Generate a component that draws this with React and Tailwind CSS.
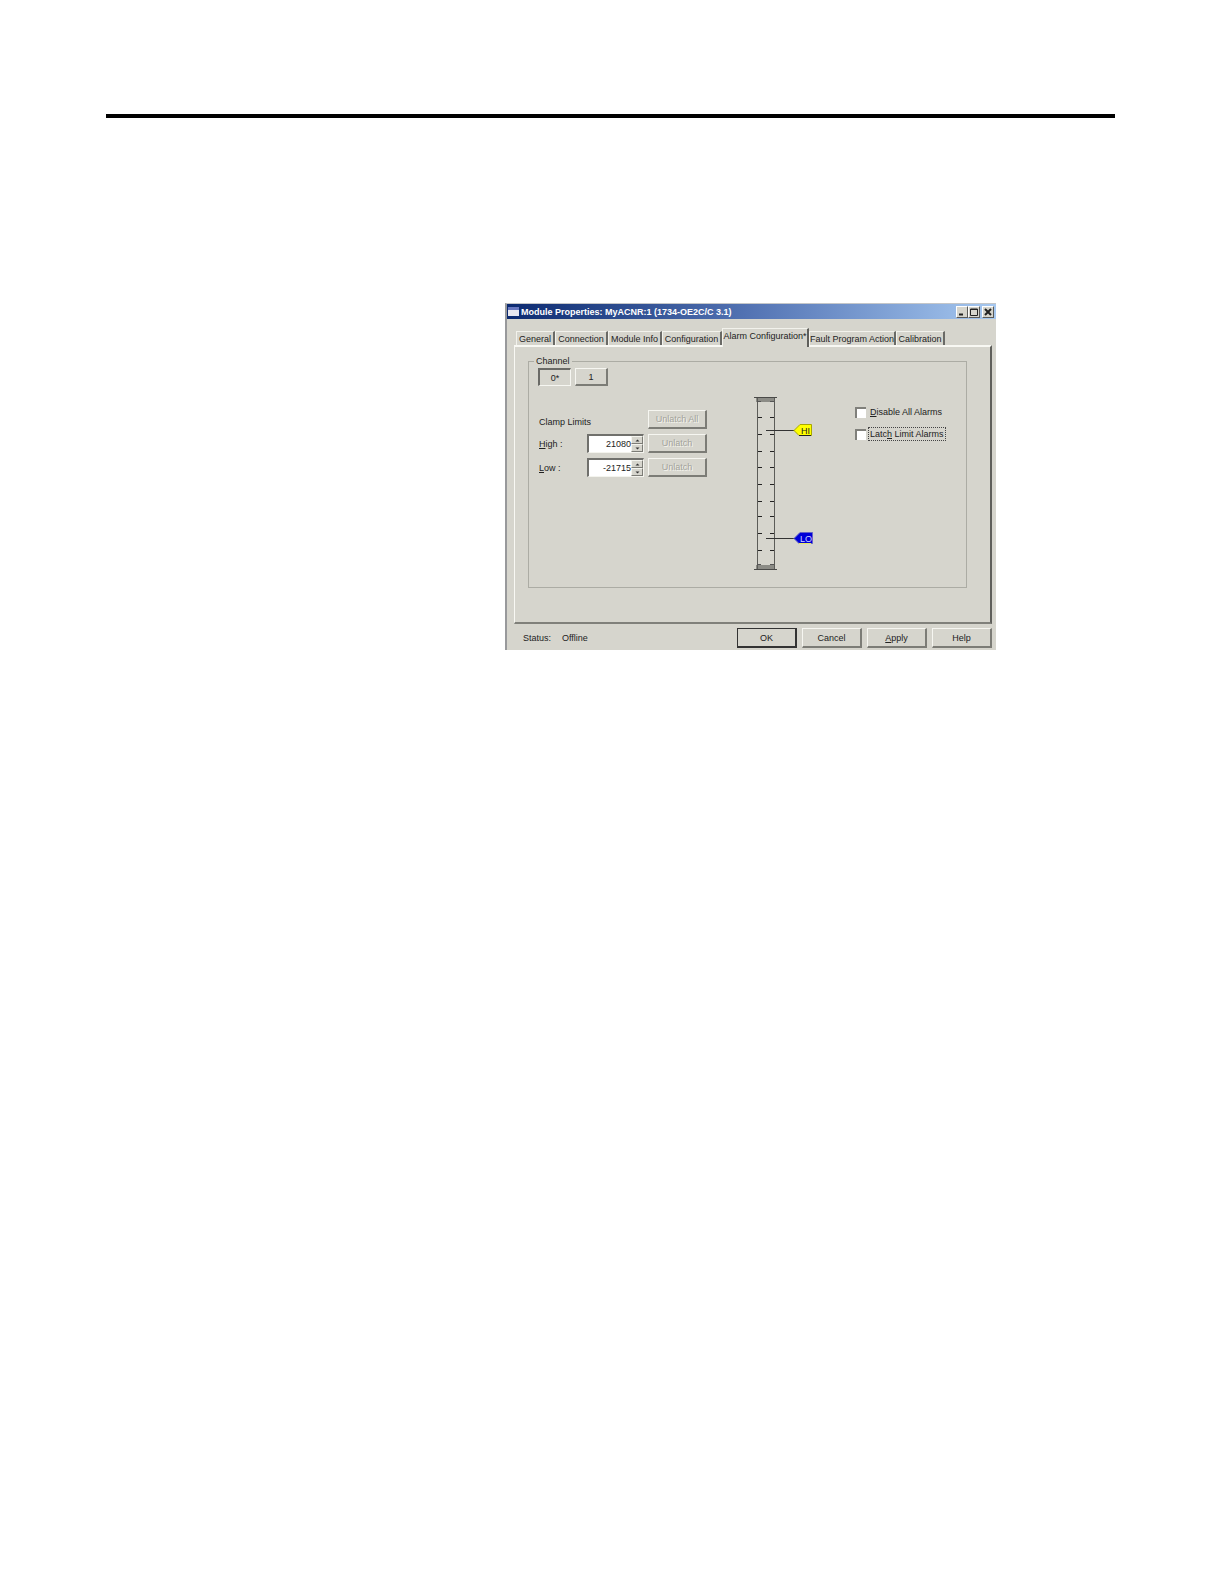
import clsx from 'clsx'
import { useState } from 'react'

const TABS = [
	{ name: 'General', width: 'w-[39px]' },
	{ name: 'Connection', width: 'w-[53px]' },
	{ name: 'Module Info', width: 'w-[54px]' },
	{ name: 'Configuration', width: 'w-[60px]' },
	{ name: 'Alarm Configuration*', width: 'w-[87px]' },
	{ name: 'Fault Program Action', width: 'w-[87px]' },
	{ name: 'Calibration', width: 'w-[49px]' },
]

const TICKS = [21, 38, 55, 71, 88, 105, 120, 137, 154]

const raised = 'border-t border-l border-r-2 border-b-2 border-t-[#f6f6f1] border-l-[#f6f6f1] border-r-[#7c7c76] border-b-[#7c7c76] bg-[#d6d5cd]'

const TitleButton = ({ label, children }) => (
	<button
		type="button"
		aria-label={label}
		className="flex h-3 w-3 items-center justify-center border border-t-white border-l-white border-r-[#5a5a58] border-b-[#5a5a58] bg-[#d6d5cd]"
	>
		<svg width="8" height="8" viewBox="0 0 8 8" fill="none" stroke="#222">
			{children}
		</svg>
	</button>
)

const Spinner = ({ id, value, onChange }) => (
	<div className="flex h-[19px] w-[57px] border border-t-2 border-l-2 border-t-[#70706c] border-l-[#70706c] border-r-[#f4f4ee] border-b-[#f4f4ee] bg-white">
		<input
			id={id}
			type="text"
			value={value}
			onChange={(e) => onChange(Number(e.target.value) || 0)}
			className="w-0 flex-1 bg-white text-right outline-none"
		/>
		<div className="flex w-3 flex-col">
			<button type="button" aria-label="Increase" onClick={() => onChange(value + 1)} className="flex flex-1 items-center justify-center border border-t-[#f4f4ee] border-l-[#f4f4ee] border-r-[#7c7c76] border-b-[#7c7c76] bg-[#d6d5cd]">
				<svg width="5" height="3" viewBox="0 0 5 3"><path d="M0.5 2.5L2.5 0.5L4.5 2.5Z" fill="#333" /></svg>
			</button>
			<button type="button" aria-label="Decrease" onClick={() => onChange(value - 1)} className="flex flex-1 items-center justify-center border border-t-[#f4f4ee] border-l-[#f4f4ee] border-r-[#7c7c76] border-b-[#7c7c76] bg-[#d6d5cd]">
				<svg width="5" height="3" viewBox="0 0 5 3"><path d="M0.5 0.5L2.5 2.5L4.5 0.5Z" fill="#333" /></svg>
			</button>
		</div>
	</div>
)

const UnlatchButton = ({ children }) => (
	<button type="button" disabled className={clsx(raised, 'h-[19px] w-[59px] text-[#a3a39b] [text-shadow:1px_1px_0_#f4f4ee]')}>
		{children}
	</button>
)

const Check = ({ id, focused, children }) => (
	<div className="flex h-[14px] items-center gap-[3px]">
		<input
			id={id}
			type="checkbox"
			className="h-[11px] w-[11px] appearance-none border-t-2 border-l-2 border-[#80807b] bg-white checked:bg-[#333]"
		/>
		<label
			htmlFor={id}
			className={clsx('px-px leading-3 whitespace-nowrap', focused && 'outline-1 outline-dotted outline-[#444]')}
		>
			{children}
		</label>
	</div>
)

// Vertical scale with the high and low clamp markers
const Gauge = () => (
	<svg width="64" height="175" viewBox="0 0 64 175" className="shrink-0">
		<rect x="4" y="2" width="19" height="4" fill="#8c8c86" />
		<rect x="4" y="169" width="19" height="4" fill="#8c8c86" />
		<path d="M2 1.5H25M2 173.5H25" stroke="#4a4a48" />
		<path d="M5.5 2V173M22.5 2V173" stroke="#5c5c58" />
		<path d="M5 5.5H9M18 5.5H22M5 168.5H9M18 168.5H22" stroke="#555" />
		{TICKS.map((y) => (
			<path key={y} d={`M6 ${y}.5H10M18 ${y}.5H22`} stroke="#222" />
		))}
		<path d="M14 34.5H43M14 142.5H43" stroke="#333" />
		<path d="M42 34.5L48 28.5H59.5V39.5H47Z" fill="#ffff00" stroke="#a8a800" />
		<path d="M47 39.5H59" stroke="#222" />
		<text x="49" y="38" fontSize="9" fill="#222">HI</text>
		<path d="M42 142.5L48 136.5H60.5V147.5H47Z" fill="#0000d8" stroke="#6464c8" />
		<path d="M47 147.5H59" stroke="#e8e860" />
		<text x="48" y="146" fontSize="9" fill="#d0d0ff">LO</text>
	</svg>
)

const App = () => {
	const [tab, setTab] = useState('Alarm Configuration*')
	const [channel, setChannel] = useState(0)
	const [high, setHigh] = useState(21080)
	const [low, setLow] = useState(-21715)

	return (
		<div className="min-h-screen bg-white pt-[114px] pr-[109px] pl-[106px]">
			<hr className="border-t-4 border-black" />

			<main className="mt-[185px] mr-[119px] ml-auto max-w-[491px] border-t border-l-2 border-t-[#c4c6c8] border-l-[#98999b] bg-[#d6d5cd] pb-[2px] font-['Liberation_Sans',sans-serif] text-[9px] leading-[10px] text-[#222]">
				{/* Title bar */}
				<header className="flex h-[15px] items-center bg-linear-to-r from-[#0c2a70] via-[#5474b4] to-[#a6c8f0] pr-[2px] pl-px">
					<svg width="11" height="9" viewBox="0 0 11 9">
						<rect width="11" height="9" fill="#e8e8f0" />
						<rect width="11" height="3" fill="#6878c0" />
					</svg>
					<h1 className="ml-[2px] flex-1 font-bold whitespace-nowrap text-white">
						Module Properties: MyACNR:1 (1734-OE2C/C 3.1)
					</h1>
					<div className="flex">
						<TitleButton label="Minimize"><path d="M1 6.5H5" strokeWidth="2" /></TitleButton>
						<TitleButton label="Maximize"><path d="M0.5 1H7.5V7.5H0.5Z M0 1.5H8" /></TitleButton>
						<div className="ml-[2px]">
							<TitleButton label="Close"><path d="M1 1L7 7M7 1L1 7" strokeWidth="2" /></TitleButton>
						</div>
					</div>
				</header>

				<div className="pt-[9px] pr-1 pl-[7px]">
					{/* Tabs */}
					<div role="tablist" className="flex items-end pl-[2px]">
						{TABS.map(({ name, width }) => (
							<button
								key={name}
								type="button"
								role="tab"
								aria-selected={tab === name}
								onClick={() => setTab(name)}
								className={clsx(
									width,
									'shrink-0 border-t border-l border-t-[#f2f2ec] border-l-[#f2f2ec] text-center whitespace-nowrap',
									tab === name
										? 'relative -mb-[2px] h-[19px] border-r-2 border-r-[#5f5f5b] bg-[#d6d5cd] pb-[5px]'
										: 'h-[14px] border-r-2 border-r-[#6a6a66]',
								)}
							>
								{name}
							</button>
						))}
					</div>

					<section className="border-t-2 border-r-2 border-b-2 border-l border-t-[#f8f8f3] border-r-[#5f5f5b] border-b-[#80807a] border-l-[#f8f8f3] px-[13px] pt-[9px] pb-[34px]">
						<fieldset className="mr-[10px] border border-[#acaca4] px-[9px] pb-[16px]">
							<legend className="-ml-[4px] px-[2px]">Channel</legend>

							<div className="flex gap-1 pt-[2px]">
								{['0*', '1'].map((name, i) => (
									<button
										key={name}
										type="button"
										aria-pressed={channel === i}
										onClick={() => setChannel(i)}
										className={clsx(
											'h-[18px] w-[33px]',
											channel === i
												? 'border-t-2 border-l-2 border-r border-b border-t-[#6a6a66] border-l-[#6a6a66] border-r-[#f6f6f1] border-b-[#f6f6f1]'
												: raised,
										)}
									>
										{name}
									</button>
								))}
							</div>

							<div className="mt-[10px] flex items-start">
								<div className="mt-[14px] grid grid-cols-[49px_57px_60px] items-center gap-y-[5px]">
									<span className="col-span-2 self-end pb-[2px] pl-px">Clamp Limits</span>
									<div className="pl-1"><UnlatchButton>Unlatch All</UnlatchButton></div>
									<label htmlFor="high" className="pl-px"><u>H</u>igh :</label>
									<Spinner id="high" value={high} onChange={setHigh} />
									<div className="pl-1"><UnlatchButton>Unlatch</UnlatchButton></div>
									<label htmlFor="low" className="pl-px"><u>L</u>ow :</label>
									<Spinner id="low" value={low} onChange={setLow} />
									<div className="pl-1"><UnlatchButton>Unlatch</UnlatchButton></div>
								</div>

								<div className="ml-12">
									<Gauge />
								</div>

								<div className="mt-[9px] ml-[39px] flex flex-col gap-2">
									<Check id="disable"><u>D</u>isable All Alarms</Check>
									<Check id="latch" focused>Latc<u>h</u> Limit Alarms</Check>
								</div>
							</div>
						</fieldset>
					</section>

					{/* Status and dialog buttons */}
					<footer className="flex items-center pt-1 pl-[9px]">
						<span className="w-[39px]">Status:</span>
						<span className="flex-1">Offline</span>
						<div className="flex gap-[5px]">
							<button type="button" className="h-5 w-[60px] border border-r-2 border-b-2 border-[#333] bg-[#d6d5cd]">OK</button>
							<button type="button" className={clsx(raised, 'h-5 w-[60px]')}>Cancel</button>
							<button type="button" className={clsx(raised, 'h-5 w-[60px]')}><u>A</u>pply</button>
							<button type="button" className={clsx(raised, 'h-5 w-[60px]')}>Help</button>
						</div>
					</footer>
				</div>
			</main>
		</div>
	)
}

export default App
